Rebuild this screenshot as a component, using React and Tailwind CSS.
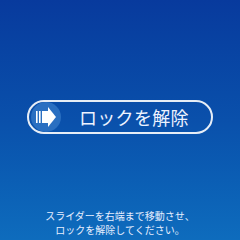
const ArrowIcon = () => (
  <svg width="20" height="20" viewBox="0 0 20 20" fill="white">
    <rect x="0" y="4" width="1.6" height="12" />
    <rect x="3" y="4" width="1.6" height="12" />
    <rect x="6" y="4" width="7" height="12" />
    <polygon points="12,0 20,10 12,20" />
  </svg>
);

export default function App() {
  const font = { fontFamily: '"Noto Sans CJK JP", "Noto Sans", sans-serif' };
  return (
    <div
      className="w-[240px] h-[240px] flex flex-col items-center bg-gradient-to-b from-[#083a9d] via-[#0a50ab] to-[#0e6cbd] overflow-hidden"
      style={font}
    >
      <div className="mt-[100px] w-[186px] h-[34px] rounded-full border-2 border-white/90 flex items-center pl-[2px]">
        <div className="w-[30px] h-[30px] rounded-full bg-[#2a6fc1] flex items-center justify-center shrink-0">
          <ArrowIcon />
        </div>
        <span className="ml-[18px] text-[18px] leading-none text-[#eef3ff] tracking-[0.3px]">ロックを解除</span>
      </div>
      <div className="mt-[75px] text-center text-[10px] leading-[14px] text-[#e6eeff]">
        <p>スライダーを右端まで移動させ、</p>
        <p>ロックを解除してください。</p>
      </div>
    </div>
  );
}
